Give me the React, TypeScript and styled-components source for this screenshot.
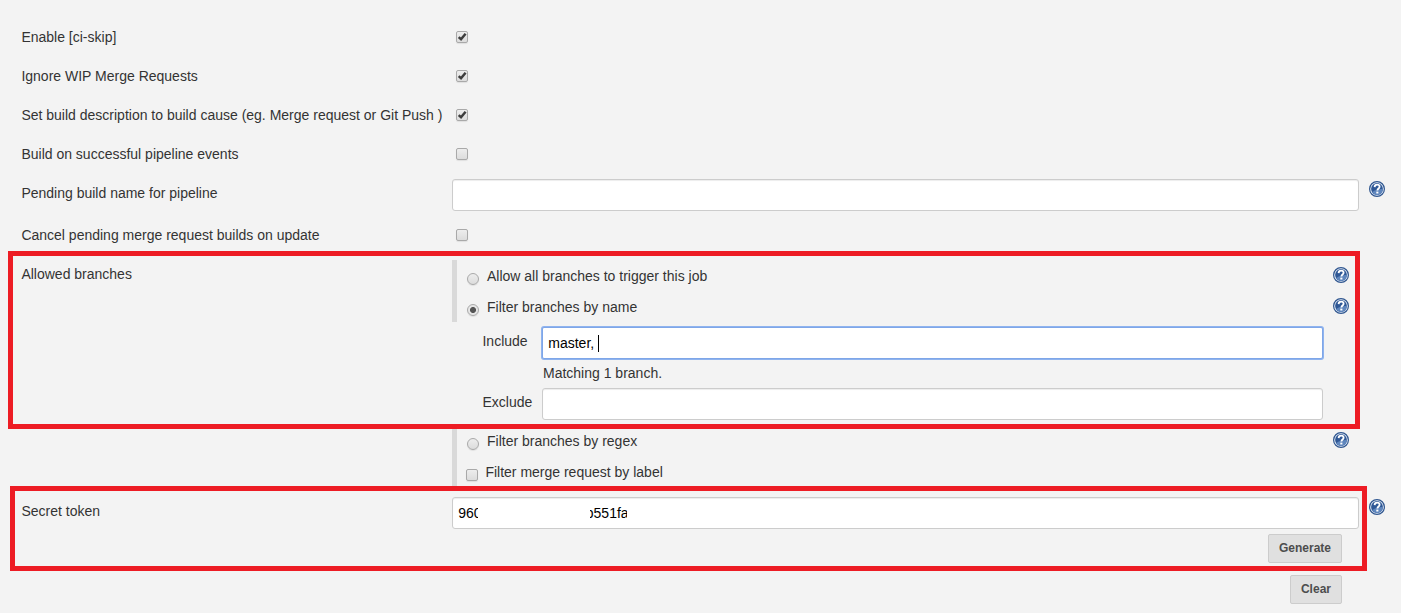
import React from 'react';
import styled, { createGlobalStyle, css } from 'styled-components';

const GlobalStyle = createGlobalStyle`
  * { box-sizing: border-box; }
  body {
    margin: 0;
    background: #f3f3f3;
    color: #333;
    font: 14px/18px "Liberation Sans", Arial, sans-serif;
    overflow: hidden;
  }
`;

const Page = styled.main`
  position: relative;
  width: 1401px;
  height: 613px;
  padding-top: 18px;
  overflow: hidden;
`;

const Row = styled.div<{ $h?: number }>`
  display: grid;
  grid-template-columns: 430.6px 907px 26px;
  height: ${p => p.$h ?? 39}px;
  padding-left: 21.4px;
`;

const Label = styled.label`
  padding-top: 10px;
  white-space: nowrap;
`;

const Control = styled.div<{ $top?: number }>`
  padding-top: ${p => p.$top ?? 5}px;
`;

const mark = css`
  display: block;
  flex: none;
  width: 12px;
  height: 12px;
  border: 1px solid #a9a9a9;
  background: linear-gradient(#ededed, #dcdcdc);
  box-shadow: 0 1px 1px rgba(0, 0, 0, 0.08);
`;

const Box = styled.span`
  ${mark}
  border-radius: 2px;
  svg { display: block; width: 10px; height: 10px; }
`;

const Round = styled.span<{ $on?: boolean }>`
  ${mark}
  border-radius: 50%;
  ${p => p.$on && css`
    background: radial-gradient(circle at center, #555 2.6px, #e6e6e6 3.4px);
  `}
`;

const CheckCell = styled.div`
  padding: 13px 0 0 4px;
`;

const Field = styled.div<{ $focus?: boolean }>`
  display: flex;
  align-items: center;
  width: 100%;
  height: 32px;
  padding: 0 5.3px;
  color: #000;
  background: #fff;
  border: 1px solid ${p => (p.$focus ? '#7ea6e8' : '#ccc')};
  border-radius: ${p => (p.$focus ? 2 : 3)}px;
  box-shadow: ${p => (p.$focus ? '0 0 0 1px #8fb3ee' : 'inset 0 1px 1px rgba(0,0,0,0.075)')};
  white-space: pre;
`;

const Caret = styled.span`
  width: 1px;
  height: 17px;
  background: #000;
`;

const HelpCell = styled.div<{ $top: number }>`
  padding: ${p => p.$top}px 0 0 10px;
  svg { display: block; }
`;

const Group = styled.div<{ $h: number }>`
  height: ${p => p.$h}px;
  border-left: 5px solid #d9d9d9;
`;

const Option = styled.div<{ $left?: number; $gap?: number }>`
  display: flex;
  height: 31px;
  padding: 7px 10px 0 ${p => p.$left ?? 10}px;
  gap: ${p => p.$gap ?? 8}px;
  ${Box}, ${Round} { margin-top: 6px; }
  > svg { margin-left: auto; }
`;

const Branches = styled.div`
  display: grid;
  grid-template-columns: 59.5px 781px;
  grid-template-rows: 37px 24px 42px;
  padding-left: 30.5px;
`;

const BranchLabel = styled.label<{ $top: number }>`
  padding-top: ${p => p.$top}px;
`;

const BranchControl = styled.div<{ $top: number }>`
  padding-top: ${p => p.$top}px;
`;

const Matching = styled.div`
  grid-column: 2;
  padding: 5px 0 0 1px;
`;

const Fragment = styled.span<{ $w: number; $shift?: number; $space?: number }>`
  display: block;
  width: ${p => p.$w}px;
  margin-left: ${p => p.$space ?? 0}px;
  text-indent: ${p => p.$shift ?? 0}px;
  overflow: hidden;
`;

const Actions = styled.div`
  display: flex;
  flex-direction: column;
  align-items: flex-end;
  gap: 12px;
  margin: 5px 17px 0 0;
`;

const Button = styled.button`
  height: 29px;
  padding: 0 10px 2px;
  color: #4d4d4d;
  background: #e0e0e0;
  border: 1px solid #ccc;
  border-radius: 2px;
  font: bold 12px/18px "Liberation Sans", Arial, sans-serif;
`;

const Highlight = styled.div<{ $x: number; $y: number; $w: number; $h: number }>`
  position: absolute;
  left: ${p => p.$x}px;
  top: ${p => p.$y}px;
  width: ${p => p.$w}px;
  height: ${p => p.$h}px;
  border: 5px solid #ed1c24;
  pointer-events: none;
`;

const Help = () => (
  <svg width="16" height="16" viewBox="0 0 16 16">
    <circle cx="8" cy="8" r="7.4" fill="#e9eff8" stroke="#2f568f" strokeWidth="1.2" />
    <circle cx="8" cy="8" r="5.9" fill="#2f5896" />
    <path d="M3 11.2A5.9 5.9 0 0 0 13.9 8C10 7.8 6 9 3 11.2Z" fill="#5f86bd" />
    <path d="M5.6 6.1C5.7 4.4 6.7 3.7 8.1 3.7c1.5 0 2.5.8 2.5 2.1 0 1.7-2.2 1.8-2.2 3.7" fill="none" stroke="#fff" strokeWidth="1.8" />
    <rect x="7.3" y="10.6" width="2.1" height="1.9" fill="#fff" />
  </svg>
);

const Check = ({ on }: { on?: boolean }) => (
  <Box>
    {on && (
      <svg viewBox="0 0 10 10">
        <path d="M1.7 5.1 4 7.2 8.6 1.7" fill="none" stroke="#3d3d3d" strokeWidth="2.5" />
      </svg>
    )}
  </Box>
);

const CheckRow = ({ text, on, h }: { text: string; on?: boolean; h?: number }) => (
  <Row $h={h}>
    <Label>{text}</Label>
    <CheckCell><Check on={on} /></CheckCell>
  </Row>
);

export default function App() {
  return (
    <>
      <GlobalStyle />
      <Page>
        <CheckRow text="Enable [ci-skip]" on />
        <CheckRow text="Ignore WIP Merge Requests" on />
        <CheckRow text="Set build description to build cause (eg. Merge request or Git Push )" on />
        <CheckRow text="Build on successful pipeline events" />
        <Row $h={42}>
          <Label>Pending build name for pipeline</Label>
          <Control><Field /></Control>
          <HelpCell $top={7}><Help /></HelpCell>
        </Row>
        <CheckRow text="Cancel pending merge request builds on update" />
        <Row $h={237}>
          <Label>Allowed branches</Label>
          <Control>
            <Group $h={62}>
              <Option><Round />Allow all branches to trigger this job<Help /></Option>
              <Option><Round $on />Filter branches by name<Help /></Option>
            </Group>
            <Branches>
              <BranchLabel $top={10}>Include</BranchLabel>
              <BranchControl $top={5}><Field $focus>master, <Caret /></Field></BranchControl>
              <Matching>Matching 1 branch.</Matching>
              <BranchLabel $top={10}>Exclude</BranchLabel>
              <BranchControl $top={5}><Field /></BranchControl>
            </Branches>
            <Group $h={63}>
              <Option><Round />Filter branches by regex<Help /></Option>
              <Option $left={9} $gap={7.4}><Check />Filter merge request by label</Option>
            </Group>
          </Control>
        </Row>
        <Row $h={120}>
          <Label>Secret token</Label>
          <Control>
            <Field>
              <Fragment $w={19.5}>960</Fragment>
              <Fragment $w={37.3} $shift={-4} $space={112}>b551fa</Fragment>
            </Field>
            <Actions>
              <Button>Generate</Button>
              <Button>Clear</Button>
            </Actions>
          </Control>
          <HelpCell $top={7}><Help /></HelpCell>
        </Row>
        <Highlight $x={8} $y={251} $w={1352} $h={178} />
        <Highlight $x={10} $y={486} $w={1357} $h={85} />
      </Page>
    </>
  );
}
